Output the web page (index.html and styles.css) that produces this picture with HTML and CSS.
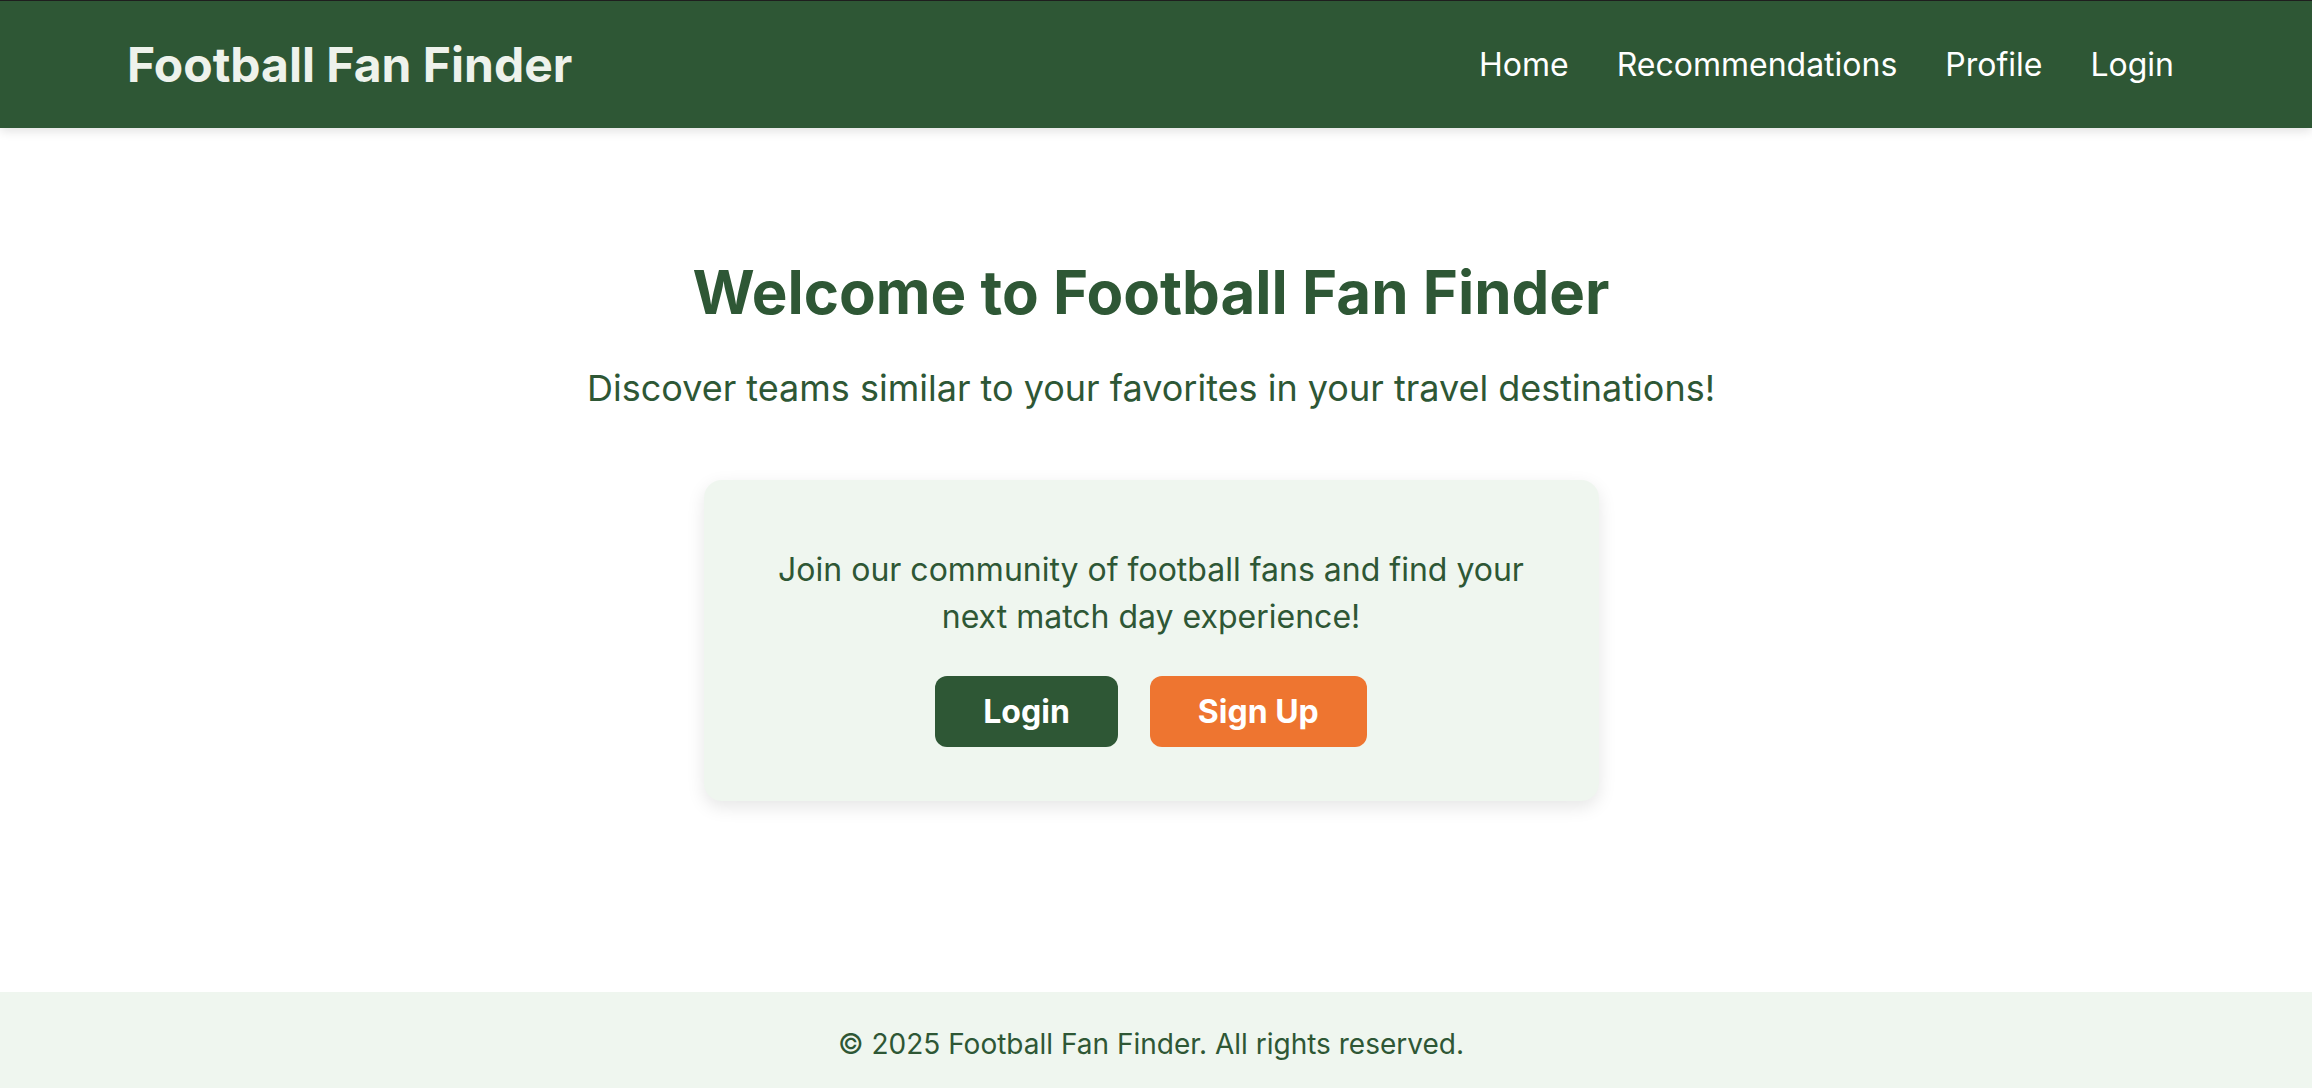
FILE: index.html
```html
<!DOCTYPE html>
<html lang="en">
<head>
<meta charset="utf-8">
<title>Football Fan Finder</title>
<link rel="stylesheet" href="styles.css">
</head>
<body>
<div class="page">
  <header class="site-header">
    <div class="logo">Football Fan Finder</div>
    <nav class="nav">
      <a href="#" class="nav-link">Home</a>
      <a href="#" class="nav-link">Recommendations</a>
      <a href="#" class="nav-link">Profile</a>
      <a href="#" class="nav-link">Login</a>
    </nav>
  </header>
  <main class="hero">
    <h1 class="hero-title">Welcome to Football Fan Finder</h1>
    <p class="hero-sub">Discover teams similar to your favorites in your travel destinations!</p>
    <section class="card">
      <p class="card-text">Join our community of football fans and find your next match day experience!</p>
      <div class="card-actions">
        <a href="#" class="btn btn-primary">Login</a>
        <a href="#" class="btn btn-accent">Sign Up</a>
      </div>
    </section>
  </main>
  <footer class="site-footer">
    <p class="footer-text">© 2025 Football Fan Finder. All rights reserved.</p>
  </footer>
</div>
</body>
</html>
```

FILE: styles.css
```css
* { box-sizing: border-box; }
html, body { margin: 0; padding: 0; }
body {
  font-family: Inter, "Noto Sans", "Liberation Sans", sans-serif;
  background: #ffffff;
  color: #2e5735;
}
.page {
  min-height: 1088px;
  display: flex;
  flex-direction: column;
}
.site-header {
  height: 128px;
  background: #2e5735;
  border-top: 1px solid #1e1e1e;
  display: flex;
  align-items: center;
  justify-content: space-between;
  padding: 0 126px 0 127px;
  box-shadow: 0 3px 10px rgba(0,0,0,0.12);
  position: relative;
  z-index: 1;
}
.logo {
  font-size: 48px;
  font-weight: 700;
  color: #eef2ec;
}
.nav {
  display: flex;
  gap: 24px;
}
.nav-link {
  color: #ffffff;
  text-decoration: none;
  font-size: 32px;
  padding: 6px 12px;
}
.hero {
  flex: 1;
  display: flex;
  flex-direction: column;
  align-items: center;
  padding-top: 128px;
  padding-right: 10px;
}
.hero-title {
  margin: 0;
  font-size: 60px;
  line-height: 72px;
  font-weight: 700;
  color: #2e5735;
}
.hero-sub {
  margin: 36px 0 0;
  font-size: 36px;
  line-height: 48px;
  color: #2e5735;
}
.card {
  margin-top: 68px;
  width: 895px;
  background: #eff6ef;
  border-radius: 18px;
  box-shadow: 0 6px 18px rgba(0,0,0,0.10);
  padding: 66px 48px 54px;
  text-align: center;
}
.card-text {
  margin: 0 0 36px;
  font-size: 32px;
  line-height: 47px;
  color: #2e5735;
}
.card-actions {
  display: flex;
  justify-content: center;
  gap: 32px;
}
.btn {
  display: inline-flex;
  align-items: center;
  justify-content: center;
  height: 71px;
  padding: 0 48px;
  border-radius: 12px;
  font-size: 32px;
  font-weight: 700;
  color: #ffffff;
  text-decoration: none;
}
.btn-primary { background: #2e5735; }
.btn-accent { background: #ee7530; }
.site-footer {
  height: 96px;
  background: #eff6ef;
  display: flex;
  align-items: center;
  justify-content: center;
  padding: 8px 10px 0 0;
}
.footer-text {
  margin: 0;
  font-size: 28px;
  color: #2e5735;
}
```
